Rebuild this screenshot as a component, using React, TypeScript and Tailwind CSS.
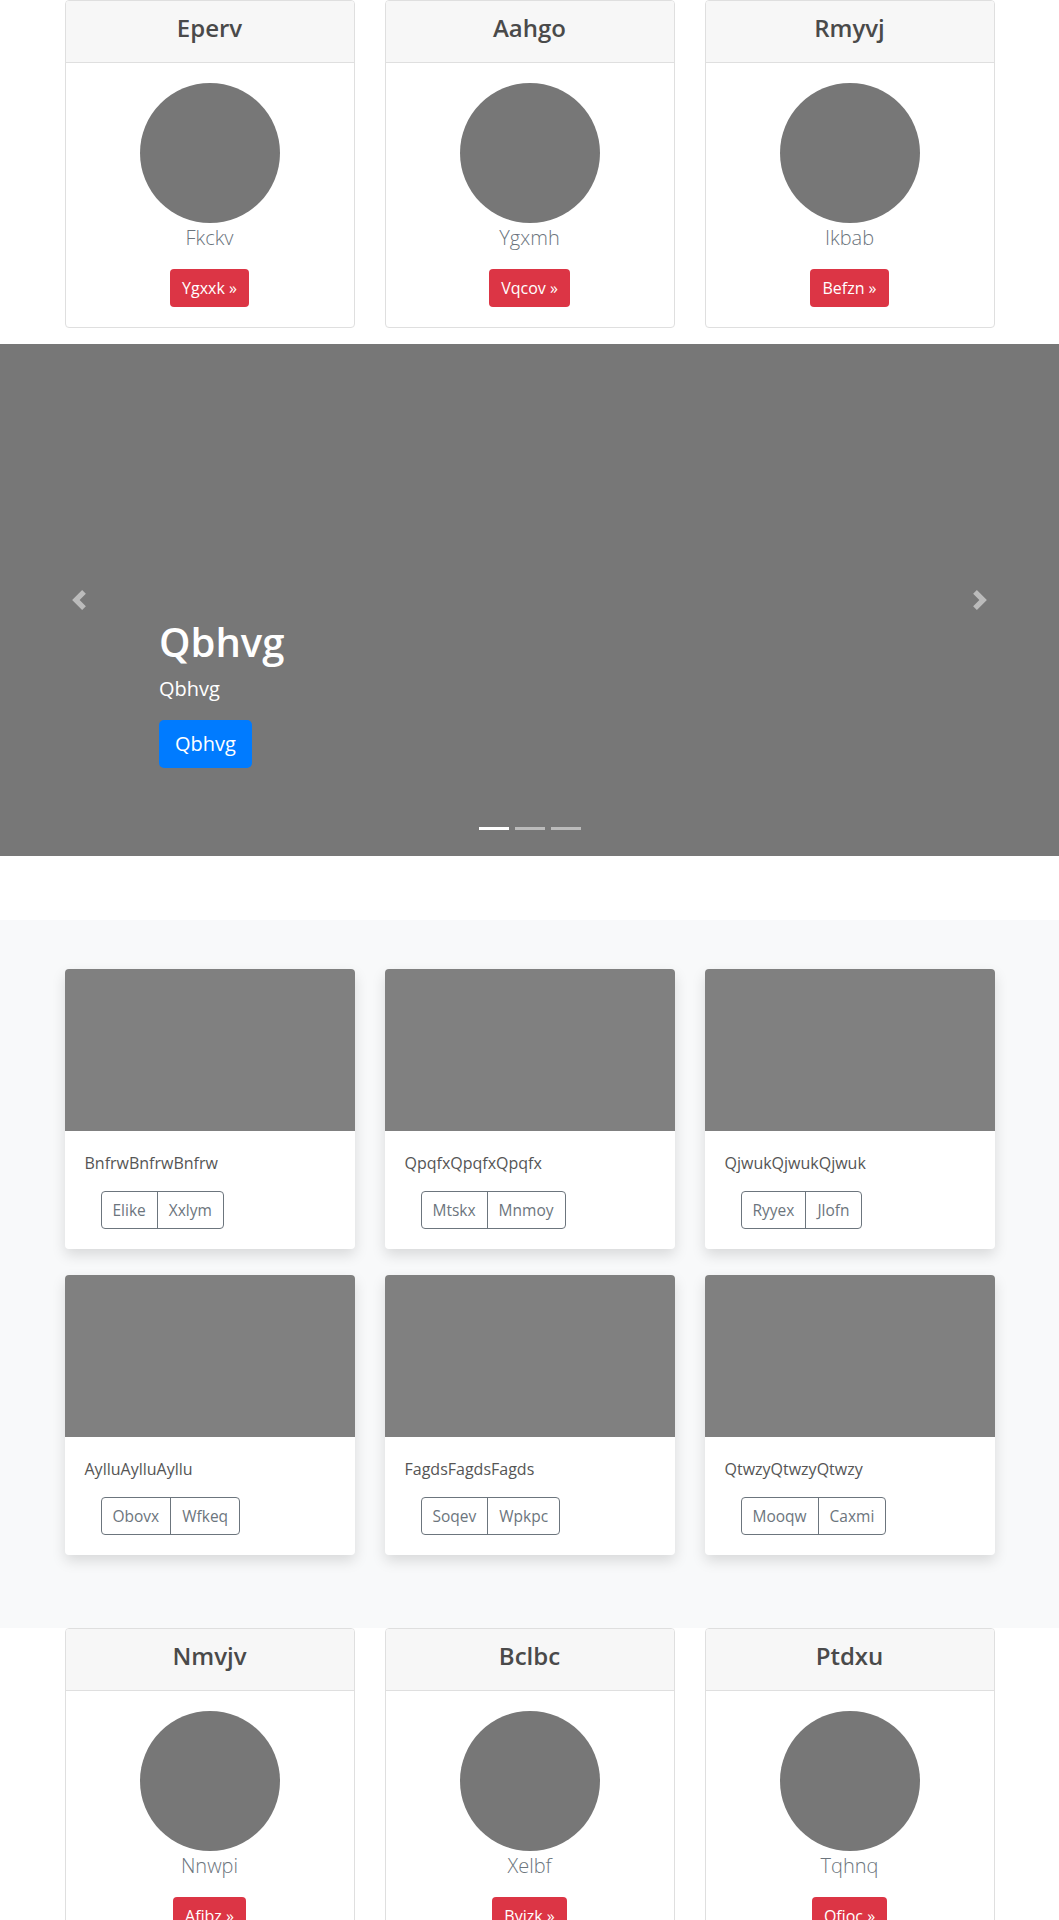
import React from 'react';

type Pricing = { title: string; name: string; action: string };
type Album = { text: string; a: string; b: string };

const topCards: Pricing[] = [
  { title: 'Eperv', name: 'Fkckv', action: 'Ygxxk' },
  { title: 'Aahgo', name: 'Ygxmh', action: 'Vqcov' },
  { title: 'Rmyvj', name: 'Ikbab', action: 'Befzn' },
];

const bottomCards: Pricing[] = [
  { title: 'Nmvjv', name: 'Nnwpi', action: 'Afibz' },
  { title: 'Bclbc', name: 'Xelbf', action: 'Byizk' },
  { title: 'Ptdxu', name: 'Tqhnq', action: 'Ofioc' },
];

const albums: Album[] = [
  { text: 'BnfrwBnfrwBnfrw', a: 'Elike', b: 'Xxlym' },
  { text: 'QpqfxQpqfxQpqfx', a: 'Mtskx', b: 'Mnmoy' },
  { text: 'QjwukQjwukQjwuk', a: 'Ryyex', b: 'Jlofn' },
  { text: 'AylluAylluAyllu', a: 'Obovx', b: 'Wfkeq' },
  { text: 'FagdsFagdsFagds', a: 'Soqev', b: 'Wpkpc' },
  { text: 'QtwzyQtwzyQtwzy', a: 'Mooqw', b: 'Caxmi' },
];

function PricingCard({ card }: { card: Pricing }) {
  return (
    <div className="rounded-[4px] border border-[#dfdfdf] bg-white overflow-hidden">
      <div className="bg-[#f7f7f7] border-b border-[#dfdfdf] px-5 pt-3 pb-3 text-center">
        <h4 className="text-[24px] leading-[29px] mb-2 font-semibold text-[#4a4a4a]">{card.title}</h4>
      </div>
      <div className="p-5 flex flex-col items-center">
        <div className="w-[140px] h-[140px] rounded-full bg-[#777]" />
        <p className="text-[20px] leading-[30px] font-light text-[#6c757d] mb-4">{card.name}</p>
        <button className="h-[38px] px-3 rounded-[4px] bg-[#dc3545] text-white text-[16px] leading-6">
          {card.action} »
        </button>
      </div>
    </div>
  );
}

function PricingRow({ cards }: { cards: Pricing[] }) {
  return (
    <div className="w-[930px] mx-auto grid grid-cols-3 gap-x-[30px]">
      {cards.map(c => <PricingCard key={c.title} card={c} />)}
    </div>
  );
}

function AlbumCard({ item }: { item: Album }) {
  return (
    <div className="bg-white rounded-[4px] overflow-hidden shadow-[0_6px_14px_rgba(0,0,0,0.13)]">
      <div className="h-[162px] bg-[#808080]" />
      <div className="p-5">
        <p className="text-[16px] leading-6 text-[#555] mb-4">{item.text}</p>
        <div className="ml-4 inline-flex border border-[#6c757d] rounded-[4px] text-[#6c757d] text-[15.5px]">
          <button className="h-9 px-[11px] leading-6">{item.a}</button>
          <button className="h-9 px-[11px] leading-6 border-l border-[#6c757d]">{item.b}</button>
        </div>
      </div>
    </div>
  );
}

function Chevron({ dir }: { dir: 'left' | 'right' }) {
  return (
    <svg width="20" height="20" viewBox="0 0 8 8" fill="#fff">
      {dir === 'left'
        ? <path d="M5.25 0l-4 4 4 4 1.5-1.5L4.25 4l2.5-2.5L5.25 0z" />
        : <path d="M2.75 0l-1.5 1.5L3.75 4l-2.5 2.5L2.75 8l4-4-4-4z" />}
    </svg>
  );
}

export default function App() {
  return (
    <main className="min-h-screen bg-white" style={{ fontFamily: '"Open Sans", "Noto Sans", sans-serif' }}>
      {/* Top pricing cards */}
      <div className="mb-4">
        <PricingRow cards={topCards} />
      </div>

      {/* Carousel */}
      <div className="relative h-[512px] bg-[#777] flex flex-col justify-end pl-[159px] pb-[88px] text-white">
        <h1 className="text-[40px] leading-[48px] font-semibold mb-2">Qbhvg</h1>
        <p className="text-[20px] leading-[30px] font-medium mb-4">Qbhvg</p>
        <div>
          <button className="h-12 px-4 rounded-[5px] bg-[#007bff] text-[20px] leading-[30px]">Qbhvg</button>
        </div>

        <div className="absolute left-0 top-0 h-full w-[15%] flex items-center justify-center opacity-50">
          <Chevron dir="left" />
        </div>
        <div className="absolute right-0 top-0 h-full w-[15%] flex items-center justify-center opacity-50">
          <Chevron dir="right" />
        </div>
        <div className="absolute bottom-[26px] left-0 right-0 flex justify-center gap-[6px]">
          <span className="w-[30px] h-[3px] bg-white" />
          <span className="w-[30px] h-[3px] bg-white/50" />
          <span className="w-[30px] h-[3px] bg-white/50" />
        </div>
      </div>

      {/* Album */}
      <section className="mt-16 bg-[#f8f9fa] pt-[49px] pb-[47px]">
        <div className="w-[930px] mx-auto grid grid-cols-3 gap-x-[30px]">
          {albums.map(a => (
            <div key={a.text} className="mb-[26px]">
              <AlbumCard item={a} />
            </div>
          ))}
        </div>
      </section>

      {/* Bottom pricing cards */}
      <div className="mb-4">
        <PricingRow cards={bottomCards} />
      </div>
    </main>
  );
}
